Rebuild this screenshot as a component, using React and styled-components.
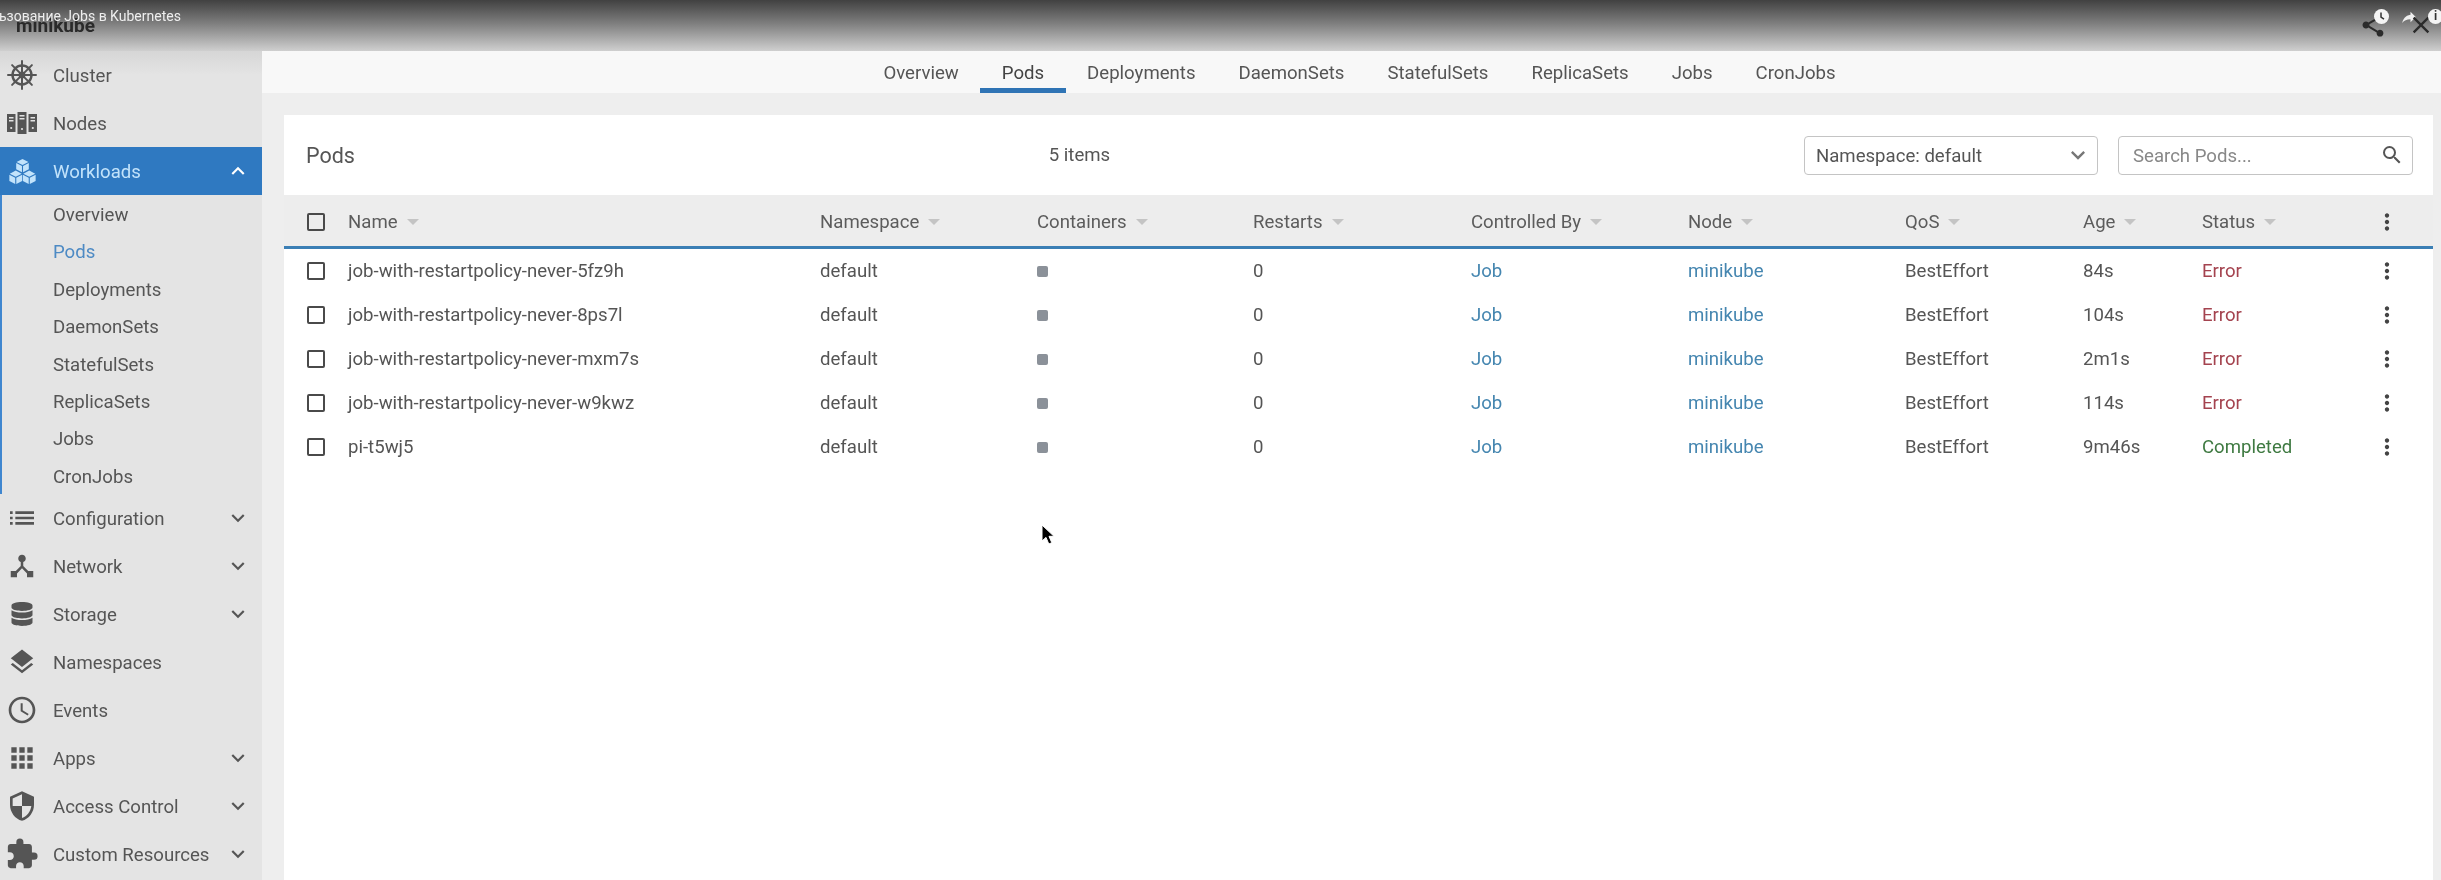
import React from 'react'
import styled, { createGlobalStyle } from 'styled-components'
import {
  MdList,
  MdDeviceHub,
  MdLayers,
  MdAccessTime,
  MdApps,
  MdSecurity,
  MdExtension,
  MdKeyboardArrowDown,
  MdKeyboardArrowUp,
  MdMoreVert,
  MdSearch,
  MdShare,
  MdClose,
  MdReply,
} from 'react-icons/md'
import { FaDatabase } from 'react-icons/fa'

const WheelIcon = props => (
  <svg viewBox="0 0 30 30" {...props}>
    <g stroke="currentColor" fill="none">
      <circle cx="15" cy="15" r="9.5" strokeWidth="2.4" />
      <circle cx="15" cy="15" r="2.4" strokeWidth="2" />
      <path
        strokeWidth="2"
        d="M15 1v28M1 15h28M5.1 5.1l19.8 19.8M24.9 5.1L5.1 24.9"
        strokeLinecap="round"
      />
    </g>
  </svg>
)

const NodesIcon = props => (
  <svg viewBox="0 0 30 24" fill="currentColor" {...props}>
    <path d="M0 3h8.5v18H0zM10.5 1h9v22h-9zM21.5 3H30v18h-8.5z" />
    <path
      fill="#e3e3e3"
      d="M2 6h4.5v1.4H2zM2 9h4.5v1.4H2zM12.5 4h5v1.4h-5zM12.5 7h5v1.4h-5zM23.5 6H28v1.4h-4.5zM23.5 9H28v1.4h-4.5z"
    />
    <circle cx="4.2" cy="17" r="1.1" fill="#e3e3e3" />
    <circle cx="15" cy="18" r="1.1" fill="#e3e3e3" />
    <circle cx="25.8" cy="17" r="1.1" fill="#e3e3e3" />
  </svg>
)

const CubesIcon = props => (
  <svg viewBox="0 0 30 28" fill="currentColor" {...props}>
    <path d="M15 0l6.6 3.4L15 6.9 8.4 3.4zM8 4.6l6.4 3.3v6.9L8 11.5zM22 4.6v6.9l-6.4 3.3V7.9z" />
    <path d="M7.5 13l6.6 3.4-6.6 3.5-6.6-3.5zM.4 17.6l6.5 3.3V28L.4 24.6zM14.6 17.6v7L8.1 28v-7.1z" />
    <path d="M22.5 13l6.6 3.4-6.6 3.5-6.6-3.5zM15.4 17.6l6.5 3.3V28l-6.5-3.4zM29.6 17.6v7L23.1 28v-7.1z" />
  </svg>
)

const ClockHands = () => (
  <svg width="15" height="15" viewBox="0 0 15 15">
    <path d="M7 3.5v4.6l3 2" fill="none" stroke="#333" strokeWidth="1.5" />
  </svg>
)

const navTop = [
  { label: 'Cluster', Icon: WheelIcon, size: 30 },
  { label: 'Nodes', Icon: NodesIcon, size: 30 },
]

const subItems = ['Overview', 'Pods', 'Deployments', 'DaemonSets', 'StatefulSets', 'ReplicaSets', 'Jobs', 'CronJobs']

const navBottom = [
  { label: 'Configuration', Icon: MdList, size: 32, arrow: true },
  { label: 'Network', Icon: MdDeviceHub, size: 30, arrow: true },
  { label: 'Storage', Icon: FaDatabase, size: 24, arrow: true },
  { label: 'Namespaces', Icon: MdLayers, size: 30 },
  { label: 'Events', Icon: MdAccessTime, size: 32 },
  { label: 'Apps', Icon: MdApps, size: 32, arrow: true },
  { label: 'Access Control', Icon: MdSecurity, size: 32, arrow: true },
  { label: 'Custom Resources', Icon: MdExtension, size: 34, arrow: true },
]

const columns = ['Name', 'Namespace', 'Containers', 'Restarts', 'Controlled By', 'Node', 'QoS', 'Age', 'Status']

const pods = [
  { name: 'job-with-restartpolicy-never-5fz9h', age: '84s', status: 'Error' },
  { name: 'job-with-restartpolicy-never-8ps7l', age: '104s', status: 'Error' },
  { name: 'job-with-restartpolicy-never-mxm7s', age: '2m1s', status: 'Error' },
  { name: 'job-with-restartpolicy-never-w9kwz', age: '114s', status: 'Error' },
  { name: 'pi-t5wj5', age: '9m46s', status: 'Completed' },
]

export default function App() {
  return (
    <Page>
      <GlobalStyle />
      <TopShade>
        <Brand>minikube</Brand>
        <VideoTitle>ьзование Jobs в Kubernetes</VideoTitle>
        <ShareIcon />
        <ClockBadge>
          <ClockHands />
        </ClockBadge>
        <ForwardIcon />
        <CloseIcon />
        <InfoBadge>i</InfoBadge>
      </TopShade>

      <Body>
        <Sidebar>
          {navTop.map(({ label, Icon, size }) => (
            <NavRow key={label}>
              <NavIcon>
                <Icon width={size} height={size} />
              </NavIcon>
              <NavLabel>{label}</NavLabel>
            </NavRow>
          ))}
          <NavRow $active>
            <NavIcon>
              <CubesIcon width={27} height={27} />
            </NavIcon>
            <NavLabel>Workloads</NavLabel>
            <NavArrow $active>
              <MdKeyboardArrowUp size={26} />
            </NavArrow>
          </NavRow>
          <SubList>
            {subItems.map(item => (
              <SubItem key={item} $active={item === 'Pods'}>
                {item}
              </SubItem>
            ))}
          </SubList>
          {navBottom.map(({ label, Icon, size, arrow }) => (
            <NavRow key={label}>
              <NavIcon>
                <Icon size={size} />
              </NavIcon>
              <NavLabel>{label}</NavLabel>
              {arrow && (
                <NavArrow>
                  <MdKeyboardArrowDown size={26} />
                </NavArrow>
              )}
            </NavRow>
          ))}
        </Sidebar>

        <Main>
          <Tabs>
            {subItems.map(item => (
              <Tab key={item} $active={item === 'Pods'}>
                {item}
              </Tab>
            ))}
          </Tabs>

          <Card>
            <CardHeader>
              <CardTitle>Pods</CardTitle>
              <ItemCount>5 items</ItemCount>
              <Filters>
                <SelectBox>
                  <BoxText>Namespace: default</BoxText>
                  <MdKeyboardArrowDown size={28} color="#777" />
                </SelectBox>
                <SearchBox>
                  <BoxText>Search Pods...</BoxText>
                  <MdSearch size={24} color="#555" />
                </SearchBox>
              </Filters>
            </CardHeader>

            <HeadRow>
              <Checkbox />
              {columns.map(col => (
                <HeadCell key={col}>
                  {col}
                  <SortCaret />
                </HeadCell>
              ))}
              <Kebab>
                <MdMoreVert size={26} />
              </Kebab>
            </HeadRow>

            {pods.map(pod => (
              <PodRow key={pod.name}>
                <Checkbox />
                <Cell>{pod.name}</Cell>
                <Cell>default</Cell>
                <Cell>
                  <ContainerDot />
                </Cell>
                <Cell>0</Cell>
                <LinkCell>Job</LinkCell>
                <LinkCell>minikube</LinkCell>
                <Cell>BestEffort</Cell>
                <Cell>{pod.age}</Cell>
                <StatusCell $ok={pod.status === 'Completed'}>{pod.status}</StatusCell>
                <Kebab>
                  <MdMoreVert size={26} />
                </Kebab>
              </PodRow>
            ))}
          </Card>
        </Main>
      </Body>

      <Cursor viewBox="0 0 14 22">
        <path d="M1 1v16l4-3.6 2.8 6.6 3-1.3-2.8-6.4H13z" fill="#000" stroke="#fff" strokeWidth="1" />
      </Cursor>
    </Page>
  )
}

const GlobalStyle = createGlobalStyle`
  html, body {
    margin: 0;
    padding: 0;
    background: #eee;
  }
  * {
    box-sizing: border-box;
  }
`

const Page = styled.div`
  position: relative;
  width: 2441px;
  height: 880px;
  overflow: hidden;
  font-family: Roboto, 'Noto Sans', sans-serif;
  color: #555;
  font-size: 18.6px;
  filter: blur(0.5px);
`

const TopShade = styled.header`
  position: relative;
  height: 51px;
  background: linear-gradient(to bottom, #414141 0%, #7d7d7d 45%, #cfcfcf 100%);
`

const Brand = styled.div`
  position: absolute;
  left: 16px;
  top: 14px;
  font-size: 19px;
  font-weight: 700;
  color: #2a2a2a;
`

const VideoTitle = styled.div`
  position: absolute;
  left: -1px;
  top: 8px;
  font-size: 14px;
  color: #eee;
`

const ShareIcon = styled(MdShare)`
  position: absolute;
  left: 2359px;
  top: 11px;
  width: 28px;
  height: 28px;
  color: #2b2b2b;
`

const Badge = styled.div`
  position: absolute;
  top: 9px;
  width: 15px;
  height: 15px;
  border-radius: 50%;
  background: #f4f4f4;
  color: #333;
  font-size: 12px;
  font-weight: 700;
  line-height: 15px;
  text-align: center;
`

const ClockBadge = styled(Badge)`
  left: 2374px;
`

const InfoBadge = styled(Badge)`
  left: 2428px;
`

const ForwardIcon = styled(MdReply)`
  position: absolute;
  left: 2400px;
  top: 8px;
  width: 18px;
  height: 18px;
  color: #eee;
  transform: scaleX(-1);
`

const CloseIcon = styled(MdClose)`
  position: absolute;
  left: 2407px;
  top: 11px;
  width: 28px;
  height: 28px;
  color: #2b2b2b;
`

const Body = styled.div`
  display: flex;
  height: 829px;
`

const Sidebar = styled.nav`
  width: 262px;
  flex: none;
  background: linear-gradient(to bottom, #d6d6d6 0, #e4e4e4 24px);
`

const NavRow = styled.div`
  display: flex;
  align-items: center;
  height: 48px;
  padding-right: 11px;
  background: ${p => (p.$active ? '#2f79c1' : 'transparent')};
  color: ${p => (p.$active ? '#c2e3fb' : '#555')};
`

const NavIcon = styled.div`
  width: 44px;
  margin-right: 9px;
  display: flex;
  justify-content: center;
  flex: none;
  color: inherit;
  svg {
    display: block;
  }
`

const NavLabel = styled.span`
  flex: 1;
  padding-top: 2px;
`

const NavArrow = styled.div`
  display: flex;
  color: ${p => (p.$active ? '#fff' : '#555')};
`

const SubList = styled.div`
  border-left: 2px solid #3f86cf;
  padding: 2px 0 0 51px;
  height: 299px;
`

const SubItem = styled.div`
  height: 37.4px;
  line-height: 37.4px;
  color: ${p => (p.$active ? '#4d8ac4' : '#555')};
`

const Main = styled.main`
  flex: 1;
  min-width: 0;
  background: #eee;
  display: flex;
  flex-direction: column;
`

const Tabs = styled.div`
  height: 42px;
  flex: none;
  padding-left: 16px;
  background: #f8f8f8;
  display: flex;
  justify-content: center;
`

const Tab = styled.div`
  padding: 0 21.5px;
  line-height: 44px;
  color: ${p => (p.$active ? '#444' : '#555')};
  border-bottom: 5px solid ${p => (p.$active ? '#2f74b5' : 'transparent')};
`

const Card = styled.section`
  flex: 1;
  margin: 22px 8px 0 22px;
  background: #fff;
`

const CardHeader = styled.div`
  height: 80px;
  padding: 0 20px 0 22px;
  display: flex;
  align-items: center;
  justify-content: space-between;
`

const CardTitle = styled.h2`
  margin: 0;
  padding-top: 1px;
  font-size: 21.5px;
  font-weight: 400;
`

const ItemCount = styled.span``

const Filters = styled.div`
  display: flex;
  gap: 20px;
`

const SelectBox = styled.div`
  width: 294px;
  height: 39px;
  padding: 0 5px 0 11px;
  border: 1px solid #c4c4c4;
  border-radius: 4px;
  display: flex;
  align-items: center;
  justify-content: space-between;
`

const SearchBox = styled(SelectBox)`
  width: 295px;
  padding: 0 8px 0 14px;
  color: #888;
`

const BoxText = styled.span`
  padding-top: 2px;
`

const HeadRow = styled.div`
  height: 54px;
  padding: 3px 0 0 23px;
  background: #ededed;
  border-bottom: 3px solid #3b7fb5;
  display: grid;
  grid-template-columns: 41px 472px 217px 216px 218px 217px 217px 178px 119px 169px 32px;
  align-items: center;
`

const PodRow = styled(HeadRow)`
  height: 44px;
  padding-top: 0;
  background: #fff;
  border-bottom: 0;
`

const Checkbox = styled.div`
  width: 18px;
  height: 18px;
  border: 2.5px solid #4a4a4a;
  border-radius: 2px;
`

const HeadCell = styled.div`
  display: flex;
  align-items: center;
  gap: 9px;
  color: #5c5c5c;
`

const SortCaret = styled.i`
  width: 0;
  height: 0;
  border-left: 6.5px solid transparent;
  border-right: 6.5px solid transparent;
  border-top: 6px solid #c4c4c4;
`

const Cell = styled.div`
  white-space: nowrap;
`

const LinkCell = styled(Cell)`
  color: #4586b0;
`

const StatusCell = styled(Cell)`
  color: ${p => (p.$ok ? '#3f7a42' : '#a4434f')};
`

const ContainerDot = styled.div`
  width: 11px;
  height: 11px;
  border-radius: 2px;
  background: #8b9199;
`

const Kebab = styled.div`
  display: flex;
  justify-content: center;
  color: #444;
`

const Cursor = styled.svg`
  position: absolute;
  left: 1041px;
  top: 524px;
  width: 14px;
  height: 22px;
`
